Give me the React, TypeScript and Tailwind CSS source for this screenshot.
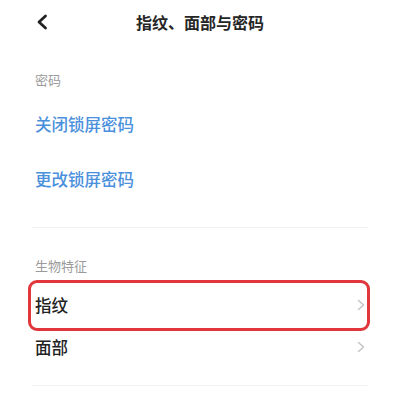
const FONT = { fontFamily: '"Noto Sans CJK SC", "Noto Sans", sans-serif' };

function Chevron() {
  return (
    <svg width="8" height="12" viewBox="0 0 8 12" className="mr-[3px]">
      <polyline points="1.5,1.5 6.5,6 1.5,10.5" fill="none" stroke="#c4c4c4" strokeWidth="1.5" strokeLinecap="round" strokeLinejoin="round" />
    </svg>
  );
}

export default function App() {
  return (
    <div className="h-[400px] w-[400px] overflow-hidden bg-white" style={FONT}>
      <header className="relative flex h-[44px] items-center justify-center">
        <svg width="12" height="16" viewBox="0 0 12 16" className="absolute left-[36px] top-[14px]">
          <polyline points="9.5,2 3,8 9.5,14" fill="none" stroke="#222" strokeWidth="2.8" strokeLinecap="round" strokeLinejoin="round" />
        </svg>
        <h1 className="text-[16px] font-bold text-[#262626]">指纹、面部与密码</h1>
      </header>

      <div className="px-[32px]">
        <p className="mt-[26px] flex h-[20px] items-center pl-[3px] text-[13px] text-[#9a9a9a]">密码</p>
        <div className="mt-[7px]">
          <div className="flex h-[55px] items-center pl-[3px] text-[16.5px] font-medium text-[#4a90dc]">关闭锁屏密码</div>
          <div className="flex h-[55px] items-center pl-[3px] text-[16.5px] font-medium text-[#4a90dc]">更改锁屏密码</div>
        </div>
        <div className="mt-[20px] h-px bg-[#f1f1f1]" />

        <p className="mt-[28px] flex h-[20px] items-center pl-[3px] text-[13px] text-[#9a9a9a]">生物特征</p>
        <div className="mt-[8px]">
          <div className="relative flex h-[42px] items-center justify-between pl-[3px] text-[16.5px] font-medium text-[#222]">
            <span>指纹</span>
            <Chevron />
            <div className="pointer-events-none absolute -left-[4px] -right-[2px] -top-[4px] -bottom-[5px] rounded-[9px] border-[3px] border-[#e0363c]" />
          </div>
          <div className="flex h-[42px] items-center justify-between pl-[3px] text-[16.5px] font-medium text-[#222]">
            <span>面部</span>
            <Chevron />
          </div>
        </div>
        <div className="mt-[17px] h-px bg-[#f1f1f1]" />
      </div>
    </div>
  );
}
